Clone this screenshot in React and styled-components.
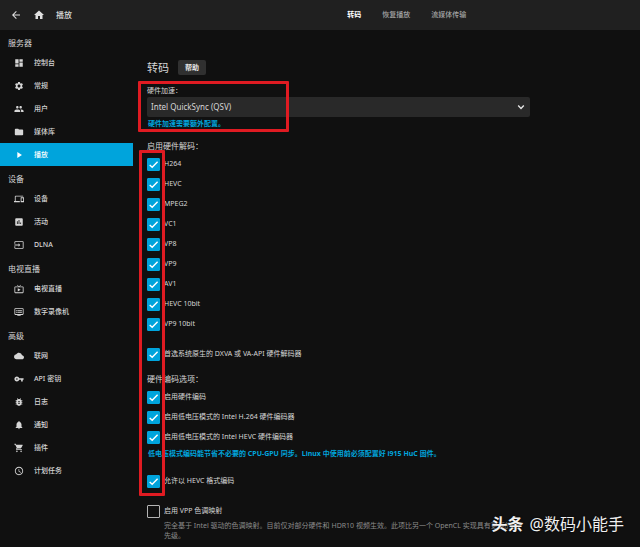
import React, { useState } from 'react'
import styled, { createGlobalStyle } from 'styled-components'
import {
  MdArrowBack,
  MdAssessment,
  MdBugReport,
  MdCloud,
  MdDashboard,
  MdDevices,
  MdDvr,
  MdFolder,
  MdHome,
  MdInput,
  MdLiveTv,
  MdNotifications,
  MdPeople,
  MdPlayArrow,
  MdSchedule,
  MdSettings,
  MdShoppingCart,
  MdVpnKey,
} from 'react-icons/md'

const tabs = ['转码', '恢复播放', '流媒体传输']

const menu = [
  {
    title: '服务器',
    items: [
      { name: '控制台', icon: MdDashboard },
      { name: '常规', icon: MdSettings },
      { name: '用户', icon: MdPeople },
      { name: '媒体库', icon: MdFolder },
      { name: '播放', icon: MdPlayArrow, active: true },
    ],
  },
  {
    title: '设备',
    items: [
      { name: '设备', icon: MdDevices },
      { name: '活动', icon: MdAssessment },
      { name: 'DLNA', icon: MdInput },
    ],
  },
  {
    title: '电视直播',
    items: [
      { name: '电视直播', icon: MdLiveTv },
      { name: '数字录像机', icon: MdDvr },
    ],
  },
  {
    title: '高级',
    items: [
      { name: '联网', icon: MdCloud },
      { name: 'API 密钥', icon: MdVpnKey },
      { name: '日志', icon: MdBugReport },
      { name: '通知', icon: MdNotifications },
      { name: '插件', icon: MdShoppingCart },
      { name: '计划任务', icon: MdSchedule },
    ],
  },
]

const codecs = ['H264', 'HEVC', 'MPEG2', 'VC1', 'VP8', 'VP9', 'AV1', 'HEVC 10bit', 'VP9 10bit']

const encoders = [
  '启用硬件编码',
  '启用低电压模式的 Intel H.264 硬件编码器',
  '启用低电压模式的 Intel HEVC 硬件编码器',
]

function Check({ label, defaultChecked = true }) {
  const [checked, setChecked] = useState(defaultChecked)
  return (
    <CheckLabel>
      <CheckBox>
        <input type='checkbox' checked={checked} onChange={(e) => setChecked(e.target.checked)} />
        {checked && (
          <svg viewBox='0 0 13 13'>
            <path d='M2.7 6.9 5.2 9.3 10.6 3.7' fill='none' stroke='#fff' strokeWidth='1.4' />
          </svg>
        )}
      </CheckBox>
      <span>{label}</span>
    </CheckLabel>
  )
}

function Header() {
  return (
    <TopBar>
      <TopLeft>
        <IconButton type='button' aria-label='返回'><MdArrowBack /></IconButton>
        <IconButton type='button' aria-label='主页'><MdHome /></IconButton>
        <PageTitle>播放</PageTitle>
      </TopLeft>
      <Tabs>
        {tabs.map((tab, i) => (
          <Tab type='button' key={tab} $active={i === 0}>{tab}</Tab>
        ))}
      </Tabs>
    </TopBar>
  )
}

function Sidebar() {
  return (
    <Side>
      {menu.map((group) => (
        <section key={group.title}>
          <SideTitle>{group.title}</SideTitle>
          <SideList>
            {group.items.map(({ name, icon: Icon, active }) => (
              <li key={name}>
                <SideLink href='#' $active={active}>
                  <Icon />
                  {name}
                </SideLink>
              </li>
            ))}
          </SideList>
        </section>
      ))}
    </Side>
  )
}

function App() {
  return (
    <Page lang='zh-CN'>
      <GlobalStyle />
      <Header />
      <Body>
        <Sidebar />
        <Main>
          <Form>
            <TitleRow>
              <Title>转码</Title>
              <HelpButton type='button'>帮助</HelpButton>
            </TitleRow>
            <FieldLabel htmlFor='accel'>硬件加速：</FieldLabel>
            <SelectWrap>
              <select id='accel' defaultValue='qsv'>
                <option value='qsv'>Intel QuickSync (QSV)</option>
              </select>
              <svg viewBox='0 0 8 8'>
                <path d='M1.2 2.6 4 5.4 6.8 2.6' fill='none' stroke='#e6e6e6' strokeWidth='1.4' />
              </svg>
            </SelectWrap>
            <Hint href='#'>硬件加速需要额外配置。</Hint>

            <Group>
              <legend>启用硬件解码：</legend>
              {codecs.map((codec) => <Check key={codec} label={codec} />)}
            </Group>
            <Block>
              <Check label='首选系统原生的 DXVA 或 VA-API 硬件解码器' />
            </Block>

            <Group>
              <legend>硬件编码选项：</legend>
              {encoders.map((encoder) => <Check key={encoder} label={encoder} />)}
              <Hint href='#'>低电压模式编码能节省不必要的 CPU-GPU 同步。Linux 中使用前必须配置好 i915 HuC 固件。</Hint>
            </Group>
            <Block>
              <Check label='允许以 HEVC 格式编码' />
            </Block>
            <Block>
              <Check label='启用 VPP 色调映射' defaultChecked={false} />
              <Description>
                完全基于 Intel 驱动的色调映射。目前仅对部分硬件和 HDR10 视频生效。此项比另一个 OpenCL 实现具有更高的优先级。
              </Description>
            </Block>
          </Form>
          <SelectMark />
          <ChecksMark />
        </Main>
      </Body>
      <Watermark>
        <b>头条</b>
        <span>@数码小能手</span>
      </Watermark>
    </Page>
  )
}

export default App

const GlobalStyle = createGlobalStyle`
  * {
    box-sizing: border-box;
  }
  body {
    margin: 0;
    background: #101010;
  }
  button, select, input {
    font: inherit;
    color: inherit;
    margin: 0;
  }
`

const Page = styled.div`
  position: relative;
  min-height: 100vh;
  overflow: hidden;
  background: #101010;
  color: #d6d6d6;
  font-family: 'Noto Sans', 'Noto Sans CJK SC', sans-serif;
  font-size: 7px;
  line-height: 10px;
`

const TopBar = styled.header`
  display: flex;
  align-items: center;
  height: 30px;
  background: #202020;
`

const TopLeft = styled.div`
  display: flex;
  align-items: center;
  flex: 0 0 53%;
  gap: 11px;
  padding-left: 10px;
`

const IconButton = styled.button`
  display: flex;
  padding: 0;
  border: 0;
  background: none;
  font-size: 12px;
  color: #e0e0e0;
`

const PageTitle = styled.h1`
  margin: 0;
  font-size: 8px;
  font-weight: 500;
`

const Tabs = styled.nav`
  display: flex;
  gap: 5px;
`

const Tab = styled.button`
  padding: 0 8px;
  border: 0;
  background: none;
  font-weight: ${(p) => (p.$active ? 700 : 500)};
  color: ${(p) => (p.$active ? '#fff' : '#a6a6a6')};
`

const Body = styled.div`
  display: flex;
`

const Side = styled.nav`
  flex: 0 0 133px;
`

const SideTitle = styled.h2`
  height: 21px;
  margin: 0;
  padding: 8px 8px 0;
  font-size: 8px;
  font-weight: 400;
`

const SideList = styled.ul`
  margin: 0;
  padding: 0;
  list-style: none;
`

const SideLink = styled.a`
  display: flex;
  align-items: center;
  gap: 10px;
  height: 23px;
  padding-left: 14px;
  font-weight: 500;
  text-decoration: none;
  color: ${(p) => (p.$active ? '#fff' : '#d6d6d6')};
  background: ${(p) => (p.$active ? '#00a4dc' : 'transparent')};

  svg {
    font-size: 10px;
  }
`

const Main = styled.main`
  position: relative;
  flex: 1;
  min-width: 0;
  padding: 30px 14px 0;
`

const Form = styled.form`
  max-width: 383px;
`

const TitleRow = styled.div`
  display: flex;
  align-items: center;
  gap: 9px;
  margin-bottom: 10px;
`

const Title = styled.h2`
  margin: 0;
  font-size: 11px;
  font-weight: 400;
`

const HelpButton = styled.button`
  height: 15px;
  padding: 0 7px;
  border: 0;
  border-radius: 2px;
  background: #303030;
  font-weight: 700;
  color: #e6e6e6;
`

const FieldLabel = styled.label`
  display: block;
  height: 12px;
  line-height: 12px;
`

const SelectWrap = styled.div`
  display: grid;
  align-items: center;

  select, svg {
    grid-area: 1 / 1;
  }
  select {
    appearance: none;
    width: 100%;
    height: 20px;
    padding: 0 4px;
    border: 0;
    border-radius: 2px;
    background: #292929;
    font-size: 8px;
  }
  svg {
    justify-self: end;
    width: 8px;
    height: 8px;
    margin-right: 5px;
    pointer-events: none;
  }
`

const Hint = styled.a`
  display: block;
  padding: 2px 1px;
  font-weight: 700;
  text-decoration: none;
  white-space: nowrap;
  color: #00a4dc;
`

const Group = styled.fieldset`
  min-width: 0;
  margin: 8px 0 0;
  padding: 0;
  border: 0;

  legend {
    height: 15px;
    padding: 2px 0 0;
    font-size: 8px;
  }
`

const Block = styled.div`
  margin-top: 10px;
`

const CheckLabel = styled.label`
  display: flex;
  align-items: center;
  gap: 4px;
  height: 20px;
`

const CheckBox = styled.span`
  display: grid;
  width: 13px;
  height: 13px;

  input, svg {
    grid-area: 1 / 1;
    width: 13px;
    height: 13px;
  }
  input {
    appearance: none;
    border: 1px solid #b4b4b4;
    border-radius: 1px;
  }
  input:checked {
    border-color: #00a4dc;
    background: #00a4dc;
  }
  svg {
    pointer-events: none;
  }
`

const Description = styled.p`
  margin: 0;
  padding: 0 5px 0 17px;
  color: #8c8c8c;
`

// red frames drawn over the form
const Mark = styled.div`
  position: absolute;
  border: 3px solid #e01b22;
  border-radius: 1px;
  pointer-events: none;
`

const SelectMark = styled(Mark)`
  top: 51px;
  left: 5px;
  width: 151px;
  height: 51px;
`

const ChecksMark = styled(Mark)`
  top: 120px;
  left: 6px;
  width: 26px;
  height: 346px;
`

const Watermark = styled.div`
  position: absolute;
  right: 16px;
  bottom: 12px;
  display: flex;
  gap: 6px;
  font-size: 16px;
  line-height: 22px;
  color: #f0f0f0;
  text-shadow: 0 0 2px #000;
`
